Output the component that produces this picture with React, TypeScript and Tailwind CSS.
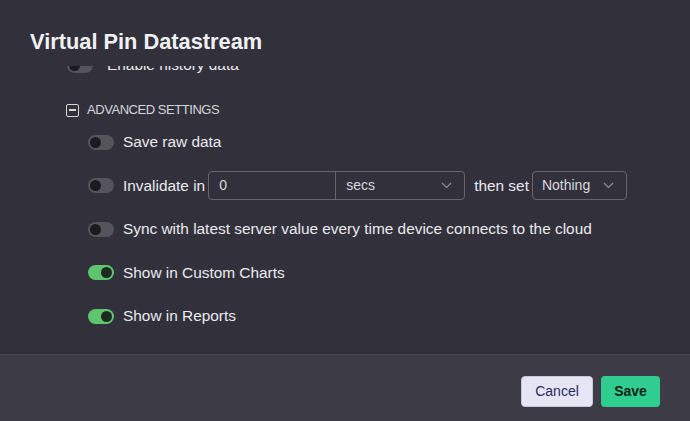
import React from "react";

function Toggle({ on }: { on?: boolean }) {
  return on ? (
    <div className="w-[26px] h-[15px] rounded-full bg-[#5ec46e] flex items-center justify-end pr-[2px] shrink-0">
      <div className="w-[11px] h-[11px] rounded-full bg-[#1d2a21]" />
    </div>
  ) : (
    <div className="w-[26px] h-[15px] rounded-full bg-[#55545d] flex items-center justify-start pl-[2px] shrink-0">
      <div className="w-[11px] h-[11px] rounded-full bg-[#1a1a20]" />
    </div>
  );
}

function Chevron() {
  return (
    <svg width="11" height="7" viewBox="0 0 11 7" fill="none">
      <path d="M1 1l4.5 4.5L10 1" stroke="#8f8e98" strokeWidth="1.1" />
    </svg>
  );
}

export default function App() {
  const font = { fontFamily: '"Liberation Sans", Arial, sans-serif' };
  return (
    <div
      className="w-[690px] h-[421px] bg-[#32313b] flex flex-col overflow-hidden text-[#e9e9ee]"
      style={font}
    >
      <div className="h-[66px] shrink-0 pl-[30px] pt-[28px]">
        <h1 className="text-[21.8px] leading-[27px] font-bold text-[#f1f1f4]">
          Virtual Pin Datastream
        </h1>
      </div>
      <div className="flex-1 overflow-hidden relative">
        <div className="-mt-[11px] flex flex-col">
          <div className="h-[20px] pl-[67px] flex items-center gap-[14px]">
            <Toggle />
            <span className="text-[15.4px] text-[#e9e9ee]">Enable history data</span>
          </div>
          <div className="mt-[25px] h-[20px] pl-[66px] flex items-center gap-[8px]">
            <div className="w-[13px] h-[13px] border border-[#d6d6dc] rounded-[2px] flex items-center justify-center">
              <div className="w-[7px] h-[1.5px] bg-[#d6d6dc]" />
            </div>
            <span className="text-[13px] text-[#d4d4da] tracking-[-0.45px]">ADVANCED SETTINGS</span>
          </div>
          <div className="pl-[88px] mt-[8px] flex flex-col gap-[15.5px]">
            <div className="h-[28px] flex items-center gap-[9px]">
              <Toggle />
              <span className="text-[15.4px]">Save raw data</span>
            </div>
            <div className="h-[28px] flex items-center">
              <Toggle />
              <span className="text-[15.4px] ml-[9px]">Invalidate in</span>
              <div className="ml-[3px] flex h-[29px] border border-[#66656e] rounded-[4px]">
                <div className="w-[127px] flex items-center pl-[10px] text-[14px] text-[#d8d8de] border-r border-[#66656e]">
                  0
                </div>
                <div className="w-[128px] flex items-center justify-between pl-[10px] pr-[12px] text-[14px] text-[#d8d8de]">
                  <span>secs</span>
                  <Chevron />
                </div>
              </div>
              <span className="text-[15.4px] ml-[9px]">then set</span>
              <div className="ml-[3px] w-[95px] h-[29px] border border-[#66656e] rounded-[4px] flex items-center justify-between pl-[9px] pr-[12px] text-[14px] text-[#d8d8de]">
                <span>Nothing</span>
                <Chevron />
              </div>
            </div>
            <div className="h-[28px] flex items-center gap-[9px]">
              <Toggle />
              <span className="text-[15.4px]">
                Sync with latest server value every time device connects to the cloud
              </span>
            </div>
            <div className="h-[28px] flex items-center gap-[9px]">
              <Toggle on />
              <span className="text-[15.4px]">Show in Custom Charts</span>
            </div>
            <div className="h-[28px] flex items-center gap-[9px]">
              <Toggle on />
              <span className="text-[15.4px]">Show in Reports</span>
            </div>
          </div>
        </div>
      </div>
      <div className="h-[67px] shrink-0 bg-[#3d3c46] border-t border-[#45444e] flex items-start justify-end pr-[30px] pt-[21px] gap-[8px]">
        <button className="w-[72px] h-[31px] rounded-[4px] bg-[#e5e5f4] border border-[#c8c8dc] text-[#2a2a66] text-[14px]">
          Cancel
        </button>
        <button className="w-[59px] h-[31px] rounded-[4px] bg-[#2fcd8f] text-[#0f1f17] text-[14px] font-bold">
          Save
        </button>
      </div>
    </div>
  );
}
